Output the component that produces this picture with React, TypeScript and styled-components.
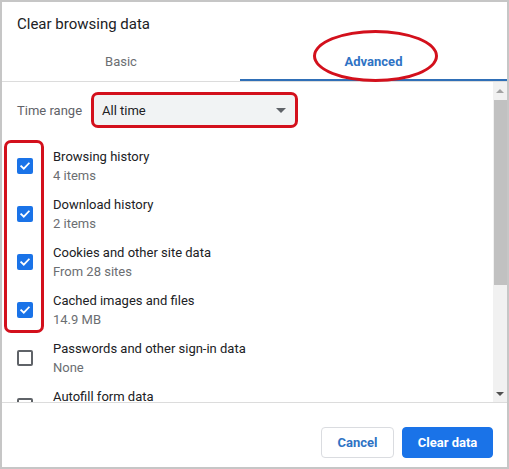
import React from "react";
import styled, { createGlobalStyle } from "styled-components";

const GlobalStyle = createGlobalStyle`
  html, body {
    margin: 0;
    padding: 0;
    background: #ffffff;
  }
  body {
    font-family: Roboto, "Liberation Sans", Arial, sans-serif;
    -webkit-font-smoothing: antialiased;
  }
`;

interface Item {
  title: string;
  detail: string;
  checked: boolean;
}

const items: Item[] = [
  { title: "Browsing history", detail: "4 items", checked: true },
  { title: "Download history", detail: "2 items", checked: true },
  { title: "Cookies and other site data", detail: "From 28 sites", checked: true },
  { title: "Cached images and files", detail: "14.9 MB", checked: true },
  { title: "Passwords and other sign-in data", detail: "None", checked: false },
  { title: "Autofill form data", detail: "", checked: false },
];

const CheckMark = () => (
  <svg width="12" height="12" viewBox="0 0 12 12">
    <path
      d="M2.2 6.2 L4.8 8.7 L9.8 3.4"
      fill="none"
      stroke="#ffffff"
      strokeWidth="1.8"
      strokeLinecap="square"
    />
  </svg>
);

const App: React.FC = () => {
  return (
    <>
      <GlobalStyle />
      <Dialog>
        <Title>Clear browsing data</Title>
        <Tabs>
          <Tab active={false} first>
            Basic
          </Tab>
          <Tab active={true}>Advanced</Tab>
        </Tabs>
        <Body>
          <Content>
            <RangeRow>
              <RangeLabel>Time range</RangeLabel>
              <Select>
                <span>All time</span>
                <Caret />
              </Select>
            </RangeRow>
            {items.map((item) => (
              <Row key={item.title}>
                <Box checked={item.checked}>{item.checked && <CheckMark />}</Box>
                <RowText>
                  <Primary>{item.title}</Primary>
                  <Secondary>{item.detail}</Secondary>
                </RowText>
              </Row>
            ))}
          </Content>
          <Scrollbar>
            <ArrowButton>
              <ArrowUp />
            </ArrowButton>
            <Thumb />
            <Track />
            <ArrowButton>
              <ArrowDown />
            </ArrowButton>
          </Scrollbar>
        </Body>
        <Footer>
          <Button primary={false}>Cancel</Button>
          <Button primary={true}>Clear data</Button>
        </Footer>
        <Ellipse />
        <CheckboxMarker />
      </Dialog>
    </>
  );
};

export default App;

const Dialog = styled.div`
  position: relative;
  width: 509px;
  height: 469px;
  box-sizing: border-box;
  border: 2px solid #c6c6c6;
  background: #ffffff;
  display: flex;
  flex-direction: column;
  overflow: hidden;
`;

const Title = styled.div`
  height: 38px;
  box-sizing: border-box;
  padding: 12px 0 0 15px;
  font-size: 15px;
  line-height: 20px;
  color: #202124;
`;

const Tabs = styled.div`
  display: flex;
  height: 42px;
  box-sizing: border-box;
  border-bottom: 1px solid #dcdcdc;
`;

const Tab = styled.div<{ active: boolean; first?: boolean }>`
  width: ${(p) => (p.first ? "238px" : "auto")};
  flex: ${(p) => (p.first ? "0 0 238px" : "1")};
  display: flex;
  align-items: center;
  justify-content: center;
  box-sizing: border-box;
  padding-top: 3px;
  font-size: 13px;
  font-weight: ${(p) => (p.active ? 700 : 400)};
  color: ${(p) => (p.active ? "#2f73c4" : "#6b6e72")};
  border-bottom: 2px solid ${(p) => (p.active ? "#2f6fb7" : "transparent")};
`;

const Body = styled.div`
  display: flex;
  height: 320px;
  border-bottom: 1px solid #dcdcdc;
`;

const Content = styled.div`
  flex: 1;
  overflow: hidden;
  padding: 13px 0 0 15px;
`;

const RangeRow = styled.div`
  display: flex;
  align-items: center;
  height: 30px;
  margin-bottom: 17px;
`;

const RangeLabel = styled.div`
  font-size: 13px;
  color: #5f6368;
  width: 77px;
`;

const Select = styled.div`
  width: 201px;
  height: 30px;
  box-sizing: border-box;
  display: flex;
  align-items: center;
  justify-content: space-between;
  padding: 0 9px 0 8px;
  background: #f1f3f4;
  border-radius: 4px;
  outline: 3px solid #d3101c;
  font-size: 13px;
  color: #202124;
`;

const Caret = styled.span`
  width: 0;
  height: 0;
  border-left: 5px solid transparent;
  border-right: 5px solid transparent;
  border-top: 5px solid #5f6368;
`;

const Row = styled.div`
  display: flex;
  align-items: center;
  height: 48px;
`;

const Box = styled.div<{ checked: boolean }>`
  width: 16px;
  height: 16px;
  box-sizing: border-box;
  flex: 0 0 16px;
  margin-right: 20px;
  border-radius: 2px;
  display: flex;
  align-items: center;
  justify-content: center;
  background: ${(p) => (p.checked ? "#1a73e8" : "#ffffff")};
  border: ${(p) => (p.checked ? "none" : "2px solid #5f6368")};
`;

const RowText = styled.div`
  display: flex;
  flex-direction: column;
  font-size: 13px;
  line-height: 19px;
`;

const Primary = styled.div`
  color: #202124;
`;

const Secondary = styled.div`
  color: #6b6e72;
  min-height: 19px;
`;

const Scrollbar = styled.div`
  flex: 0 0 14px;
  display: flex;
  flex-direction: column;
  background: #f1f1f1;
`;

const ArrowButton = styled.div`
  height: 17px;
  display: flex;
  align-items: center;
  justify-content: center;
`;

const ArrowUp = styled.span`
  width: 0;
  height: 0;
  border-left: 4px solid transparent;
  border-right: 4px solid transparent;
  border-bottom: 4px solid #a3a3a3;
`;

const ArrowDown = styled.span`
  width: 0;
  height: 0;
  border-left: 4px solid transparent;
  border-right: 4px solid transparent;
  border-top: 4px solid #505050;
`;

const Thumb = styled.div`
  height: 185px;
  margin: 1px 0 0 1px;
  background: #c1c1c1;
`;

const Track = styled.div`
  flex: 1;
`;

const Footer = styled.div`
  flex: 1;
  display: flex;
  justify-content: flex-end;
  align-items: flex-start;
  gap: 8px;
  padding: 24px 14px 0 0;
`;

const Button = styled.button<{ primary: boolean }>`
  height: 31px;
  width: ${(p) => (p.primary ? "91px" : "73px")};
  border-radius: 4px;
  font-family: Roboto, "Liberation Sans", Arial, sans-serif;
  font-size: 13px;
  font-weight: 700;
  cursor: pointer;
  background: ${(p) => (p.primary ? "#1a73e8" : "#ffffff")};
  color: ${(p) => (p.primary ? "#ffffff" : "#2f73c4")};
  border: 1px solid ${(p) => (p.primary ? "#1a73e8" : "#dadce0")};
`;

const Ellipse = styled.div`
  position: absolute;
  left: 311px;
  top: 28px;
  width: 125px;
  height: 52px;
  box-sizing: border-box;
  border: 3px solid #d3101c;
  border-radius: 50%;
  pointer-events: none;
`;

const CheckboxMarker = styled.div`
  position: absolute;
  left: 2px;
  top: 138px;
  width: 40px;
  height: 193px;
  box-sizing: border-box;
  border: 3px solid #d3101c;
  border-radius: 7px;
  pointer-events: none;
`;
